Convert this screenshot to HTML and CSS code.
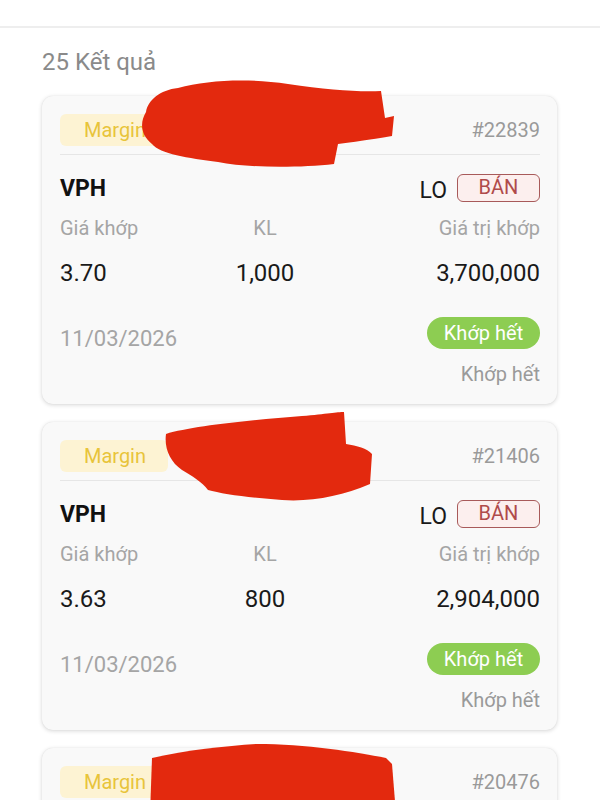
FILE: index.html
```html
<!DOCTYPE html>
<html lang="vi">
<head>
<meta charset="utf-8">
<title>Kết quả</title>
<link rel="stylesheet" href="styles.css">
</head>
<body>
<div class="topbar"></div>
<main class="content">
  <div class="count">25 Kết quả</div>

  <div class="card">
    <div class="card-head">
      <span class="tag">Margin</span>
      <span class="order-id">#22839</span>
    </div>
    <div class="divider"></div>
    <div class="row-sym">
      <span class="sym">VPH</span>
      <span class="side-wrap"><span class="otype">LO</span><span class="side">BÁN</span></span>
    </div>
    <div class="grid labels">
      <span>Giá khớp</span><span class="mid">KL</span><span class="right">Giá trị khớp</span>
    </div>
    <div class="grid values">
      <span>3.70</span><span class="mid">1,000</span><span class="right">3,700,000</span>
    </div>
    <div class="row-foot">
      <span class="date">11/03/2026</span>
      <span class="pill">Khớp hết</span>
    </div>
    <div class="status">Khớp hết</div>
    <svg class="scribble s1" width="270" height="100" viewBox="0 0 270 100"><path d="M8 34 C 10 22, 22 12, 40 10 C 70 2, 110 0, 150 6 C 190 12, 220 14, 243 13 L 247 40 L 256 38 L 254 58 C 230 62, 215 64, 200 66 L 196 86 C 160 90, 110 90, 80 84 C 50 80, 22 76, 14 66 C 2 56, 2 44, 8 34 Z" /></svg>
  </div>

  <div class="card">
    <div class="card-head">
      <span class="tag">Margin</span>
      <span class="order-id">#21406</span>
    </div>
    <div class="divider"></div>
    <div class="row-sym">
      <span class="sym">VPH</span>
      <span class="side-wrap"><span class="otype">LO</span><span class="side">BÁN</span></span>
    </div>
    <div class="grid labels">
      <span>Giá khớp</span><span class="mid">KL</span><span class="right">Giá trị khớp</span>
    </div>
    <div class="grid values">
      <span>3.63</span><span class="mid">800</span><span class="right">2,904,000</span>
    </div>
    <div class="row-foot">
      <span class="date">11/03/2026</span>
      <span class="pill">Khớp hết</span>
    </div>
    <div class="status">Khớp hết</div>
    <svg class="scribble s2" width="220" height="95" viewBox="0 0 220 95"><path d="M4 22 C 30 14, 90 8, 140 4 C 165 2, 175 0, 182 0 L 184 32 C 195 34, 205 36, 210 42 L 208 72 C 180 84, 150 90, 120 88 C 90 86, 60 82, 46 78 C 40 70, 30 64, 20 58 C 8 50, 2 36, 4 22 Z" /></svg>
  </div>

  <div class="card card-partial">
    <div class="card-head">
      <span class="tag">Margin</span>
      <span class="order-id">#20476</span>
    </div>
    <div class="divider"></div>
    <svg class="scribble s3" width="260" height="70" viewBox="0 0 260 70"><path d="M6 14 C 40 6, 80 2, 110 0 C 160 0, 210 8, 240 14 L 246 20 L 250 70 L 4 70 Z" /></svg>
  </div>
</main>
</body>
</html>
```

FILE: styles.css
```css
* { box-sizing: border-box; }
html, body { margin: 0; padding: 0; background: #ffffff; }
body {
  font-family: Roboto, "Noto Sans", "Liberation Sans", sans-serif;
  color: #1f1f1f;
  width: 600px;
  overflow: hidden;
}
.topbar {
  height: 28px;
  border-bottom: 2px solid #eeeeee;
}
.content {
  padding: 0 43px 0 42px;
}
.count {
  font-size: 24px;
  color: #8a8a8a;
  line-height: 28px;
  margin-top: 20px;
  margin-bottom: 20px;
}
.card {
  position: relative;
  background: #f9f9f9;
  border-radius: 11px;
  box-shadow: 0 1px 4px rgba(0,0,0,0.16), 0 0 1px rgba(0,0,0,0.10);
  padding: 18px 17px 18px 18px;
  margin-bottom: 18px;
}
.card-partial {
  min-height: 160px;
}
.card-head {
  display: flex;
  justify-content: space-between;
  align-items: center;
  height: 32px;
}
.tag {
  background: #fdf3d3;
  color: #e8c43a;
  font-size: 20px;
  border-radius: 6px;
  height: 32px;
  line-height: 32px;
  width: 108px;
  text-align: center;
  padding-left: 2px;
}
.order-id {
  color: #9a9a9a;
  font-size: 20px;
}
.divider {
  height: 1px;
  background: #e6e6e6;
  margin-top: 8px;
}
.row-sym {
  display: flex;
  justify-content: space-between;
  align-items: center;
  margin-top: 19px;
  height: 28px;
}
.sym {
  font-weight: 700;
  font-size: 23px;
  color: #111;
}
.side-wrap {
  display: flex;
  align-items: center;
  gap: 10px;
}
.otype {
  font-size: 23px;
  color: #1a1a1a;
  margin-top: 4px;
}
.side {
  border: 1.5px solid #a85a5a;
  background: #fcefee;
  color: #b04a4a;
  border-radius: 6px;
  font-size: 20px;
  height: 28px;
  line-height: 25px;
  width: 83px;
  text-align: center;
}
.grid {
  display: grid;
  grid-template-columns: 150px 110px 1fr;
}
.grid .mid { text-align: center; }
.grid .right { text-align: right; }
.labels {
  margin-top: 14px;
  font-size: 20px;
  line-height: 24px;
  color: #a5a5a5;
}
.values {
  margin-top: 19px;
  font-size: 24px;
  line-height: 28px;
  color: #1a1a1a;
}
.row-foot {
  display: flex;
  justify-content: space-between;
  align-items: center;
  margin-top: 30px;
  height: 32px;
}
.date {
  font-size: 22px;
  color: #a5a5a5;
  margin-top: 10px;
}
.pill {
  background: #8dcd52;
  color: #ffffff;
  font-size: 20px;
  height: 32px;
  line-height: 32px;
  border-radius: 16px;
  width: 113px;
  text-align: center;
}
.status {
  margin-top: 13px;
  text-align: right;
  font-size: 20px;
  line-height: 24px;
  color: #9a9a9a;
}
.scribble {
  position: absolute;
  fill: #e3290e;
}
.scribble.s1 { left: 96px; top: -18px; }
.scribble.s2 { left: 120px; top: -10px; }
.scribble.s3 { left: 104px; top: -4px; }
```
